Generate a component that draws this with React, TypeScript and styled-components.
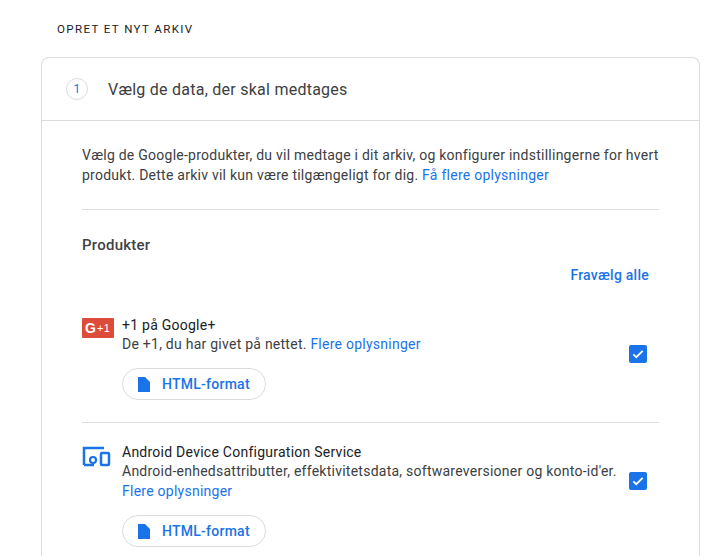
import React from "react";
import styled, { createGlobalStyle } from "styled-components";

const Global = createGlobalStyle`
  body { margin: 0; background: #fff; font-family: Roboto, "Noto Sans", Arial, sans-serif; color: #3c4043; letter-spacing: 0.25px; }
`;

const Page = styled.div`
  padding: 20px 26px 0 41px;
  height: 556px;
  overflow: hidden;
  box-sizing: border-box;
`;

const Title = styled.div`
  font-size: 11.5px;
  letter-spacing: 1.4px;
  color: #202124;
  padding-left: 16px;
  height: 37px;
  line-height: 18px;
`;

const Card = styled.div`
  border: 1px solid #dadce0;
  border-bottom: none;
  border-radius: 8px 8px 0 0;
  min-height: 520px;
`;

const CardHeader = styled.div`
  display: flex;
  align-items: center;
  height: 62px;
  padding-left: 24px;
  border-bottom: 1px solid #dadce0;
  font-size: 16px;
  color: #3c4043;
`;

const StepBadge = styled.span`
  width: 20px;
  height: 20px;
  border: 1px solid #dadce0;
  border-radius: 50%;
  display: flex;
  align-items: center;
  justify-content: center;
  font-size: 12px;
  color: #1a73e8;
  margin-right: 20px;
`;

const Body = styled.div`
  padding: 24px 40px 0 40px;
`;

const Intro = styled.p`
  margin: 0;
  font-size: 14px;
  line-height: 20px;
  padding-bottom: 24px;
  border-bottom: 1px solid #dadce0;
`;

const Link = styled.a`
  color: #1a73e8;
  text-decoration: none;
`;

const SectionTitle = styled.div`
  font-size: 15px;
  color: #202124;
  margin-top: 26px;
  font-weight: 500;
  opacity: 0.85;
`;

const DeselectRow = styled.div`
  display: flex;
  justify-content: flex-end;
  padding-right: 10px;
  margin-top: 13px;
  font-size: 14px;
  font-weight: 500;
  color: #1a73e8;
`;

const Product = styled.div<{ last?: boolean }>`
  display: flex;
  align-items: flex-start;
  padding: ${({ last }) => (last ? "20px 0 0" : "33px 0 22px")};
  border-bottom: ${({ last }) => (last ? "none" : "1px solid #dadce0")};
`;

const IconBox = styled.div`
  width: 40px;
  flex-shrink: 0;
  padding-top: 2px;
`;

const Info = styled.div`
  flex: 1;
`;

const Name = styled.div`
  font-size: 14px;
  color: #202124;
  line-height: 18px;
`;

const Desc = styled.div`
  font-size: 14px;
  line-height: 20px;
`;

const FormatButton = styled.div`
  display: inline-flex;
  align-items: center;
  gap: 12px;
  margin-top: 14px;
  height: 30px;
  padding: 0 15px;
  border: 1px solid #dadce0;
  border-radius: 16px;
  font-size: 14px;
  font-weight: 500;
  color: #1a73e8;
`;

const CheckCol = styled.div`
  width: 30px;
  display: flex;
  justify-content: flex-start;
  padding-top: 29px;
`;

const Check = styled.div`
  width: 18px;
  height: 18px;
  border-radius: 2px;
  background: #1a73e8;
  display: flex;
  align-items: center;
  justify-content: center;
`;

const CheckBox = () => (
  <Check>
    <svg width="14" height="14" viewBox="0 0 24 24">
      <path d="M4 12.5l5 5L20 6.5" fill="none" stroke="#fff" strokeWidth="3" />
    </svg>
  </Check>
);

const FileIcon = () => (
  <svg width="12" height="15" viewBox="0 0 12 15">
    <path d="M0 0h7l5 5v10H0z" fill="#1a73e8" />
  </svg>
);

const GPlus = () => (
  <svg width="32" height="20" viewBox="0 0 32 20">
    <rect width="32" height="20" rx="1" fill="#dd4b39" />
    <text x="3" y="15" fill="#fff" fontSize="14" fontWeight="bold" fontFamily="Arial">G</text>
    <text x="15" y="14" fill="#fff" fontSize="11" fontFamily="Arial">+1</text>
  </svg>
);

const DeviceIcon = () => (
  <svg width="30" height="22" viewBox="0 0 30 22">
    <path d="M2 20V3h20" fill="none" stroke="#1a73e8" strokeWidth="2.5" />
    <path d="M2 20h10" stroke="#1a73e8" strokeWidth="2.5" />
    <circle cx="11" cy="15" r="3" fill="none" stroke="#1a73e8" strokeWidth="2.2" />
    <rect x="19" y="8" width="8" height="12" rx="1" fill="none" stroke="#1a73e8" strokeWidth="2.5" />
  </svg>
);

export default function App() {
  return (
    <Page>
      <Global />
      <Title>OPRET ET NYT ARKIV</Title>
      <Card>
        <CardHeader>
          <StepBadge>1</StepBadge>
          Vælg de data, der skal medtages
        </CardHeader>
        <Body>
          <Intro>
            Vælg de Google-produkter, du vil medtage i dit arkiv, og konfigurer indstillingerne for hvert
            produkt. Dette arkiv vil kun være tilgængeligt for dig. <Link>Få flere oplysninger</Link>
          </Intro>
          <SectionTitle>Produkter</SectionTitle>
          <DeselectRow>Fravælg alle</DeselectRow>
          <Product>
            <IconBox><GPlus /></IconBox>
            <Info>
              <Name>+1 på Google+</Name>
              <Desc>De +1, du har givet på nettet. <Link>Flere oplysninger</Link></Desc>
              <FormatButton><FileIcon />HTML-format</FormatButton>
            </Info>
            <CheckCol><CheckBox /></CheckCol>
          </Product>
          <Product last>
            <IconBox><DeviceIcon /></IconBox>
            <Info>
              <Name>Android Device Configuration Service</Name>
              <Desc>
                Android-enhedsattributter, effektivitetsdata, softwareversioner og konto-id'er.
                <br />
                <Link>Flere oplysninger</Link>
              </Desc>
              <FormatButton><FileIcon />HTML-format</FormatButton>
            </Info>
            <CheckCol><CheckBox /></CheckCol>
          </Product>
        </Body>
      </Card>
    </Page>
  );
}
